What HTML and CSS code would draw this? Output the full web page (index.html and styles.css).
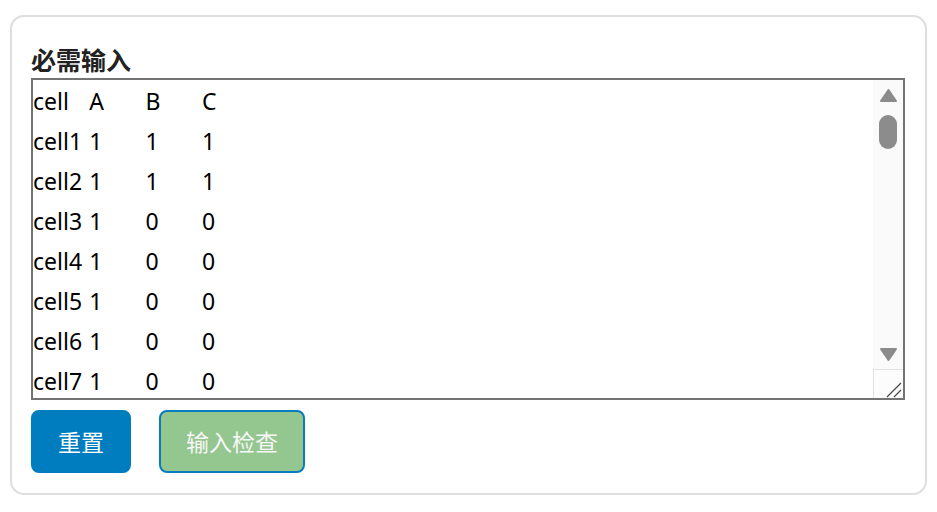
FILE: index.html
```html
<!DOCTYPE html>
<html lang="zh-CN">
<head>
<meta charset="utf-8">
<title>必需输入</title>
<link rel="stylesheet" href="styles.css">
</head>
<body>
<div class="card">
  <div class="title">必需输入</div>
  <div class="input-box">
    <textarea class="data" spellcheck="false">cell&#9;A&#9;B&#9;C
cell1&#9;1&#9;1&#9;1
cell2&#9;1&#9;1&#9;1
cell3&#9;1&#9;0&#9;0
cell4&#9;1&#9;0&#9;0
cell5&#9;1&#9;0&#9;0
cell6&#9;1&#9;0&#9;0
cell7&#9;1&#9;0&#9;0
cell8&#9;1&#9;0&#9;0
cell9&#9;1&#9;0&#9;0
cell10&#9;1&#9;0&#9;0</textarea>
    <div class="scrollbar">
      <div class="arrow">
        <svg width="19" height="15" viewBox="0 0 19 15"><path d="M9.5 2 L17 13 L2 13 Z" fill="#8b8b8b" stroke="#8b8b8b" stroke-width="2" stroke-linejoin="round"/></svg>
      </div>
      <div class="track"><div class="thumb"></div></div>
      <div class="arrow">
        <svg width="19" height="15" viewBox="0 0 19 15"><path d="M2 2 L17 2 L9.5 13 Z" fill="#8b8b8b" stroke="#8b8b8b" stroke-width="2" stroke-linejoin="round"/></svg>
      </div>
      <div class="resizer">
        <svg width="30" height="30" viewBox="0 0 30 30"><path d="M14 28 L28 14 M21 28 L28 21" stroke="#4a4a4a" stroke-width="1.3" fill="none"/></svg>
      </div>
    </div>
  </div>
  <div class="actions">
    <button class="btn btn-reset">重置</button>
    <button class="btn btn-check">输入检查</button>
  </div>
</div>
</body>
</html>
```

FILE: styles.css
```css
* { box-sizing: border-box; }
html, body { margin: 0; background: #ffffff; }
body {
  padding: 15px 10px 0 10px;
  font-family: "Noto Sans", "Noto Sans CJK SC", sans-serif;
}
.card {
  height: 480px;
  border: 2px solid #dedede;
  border-radius: 14px;
  padding: 26px 20px 20px 19px;
  display: flex;
  flex-direction: column;
}
.title {
  font-family: "Noto Sans CJK SC", sans-serif;
  font-weight: 700;
  font-size: 25px;
  line-height: 32px;
  color: #222;
  margin-bottom: 3px;
}
.input-box {
  height: 322px;
  border: 2px solid #737373;
  display: flex;
  background: #fff;
}
.data {
  flex: 1;
  border: none;
  outline: none;
  resize: none;
  overflow: hidden;
  margin: 0;
  padding: 1px 0 0 0;
  font-family: "Noto Sans", "Noto Sans CJK SC", sans-serif;
  font-size: 23px;
  line-height: 40px;
  color: #000;
  tab-size: 56.3px;
  -moz-tab-size: 56.3px;
  white-space: pre;
  background: #fff;
}
.scrollbar {
  width: 30px;
  background: #fafafa;
  display: flex;
  flex-direction: column;
}
.arrow {
  height: 30px;
  display: flex;
  align-items: center;
  justify-content: center;
}
.arrow svg { display: block; }
.track {
  flex: 1;
  padding: 5px 6px 0 6px;
}
.thumb {
  height: 34px;
  width: 18px;
  background: #8c8c8c;
  border-radius: 9px;
}
.resizer {
  height: 29px;
  border-top: 1px solid #e2e2e2;
  border-left: 1px solid #e2e2e2;
  background: #fcfcfc;
  overflow: hidden;
}
.resizer svg { display: block; margin: -1px 0 0 -1px; }
.actions {
  margin-top: 10px;
  display: flex;
  gap: 28px;
}
.btn {
  height: 63px;
  padding: 0 25px;
  border: 2px solid #0a7cbd;
  border-radius: 8px;
  font-family: "Noto Sans CJK SC", sans-serif;
  font-size: 23px;
  line-height: 1;
  color: #fff;
}
.btn-reset {
  background: #007dbe;
  border-color: #007dbe;
}
.btn-check {
  background: #94c690;
  color: #f7f7f7;
}
```
